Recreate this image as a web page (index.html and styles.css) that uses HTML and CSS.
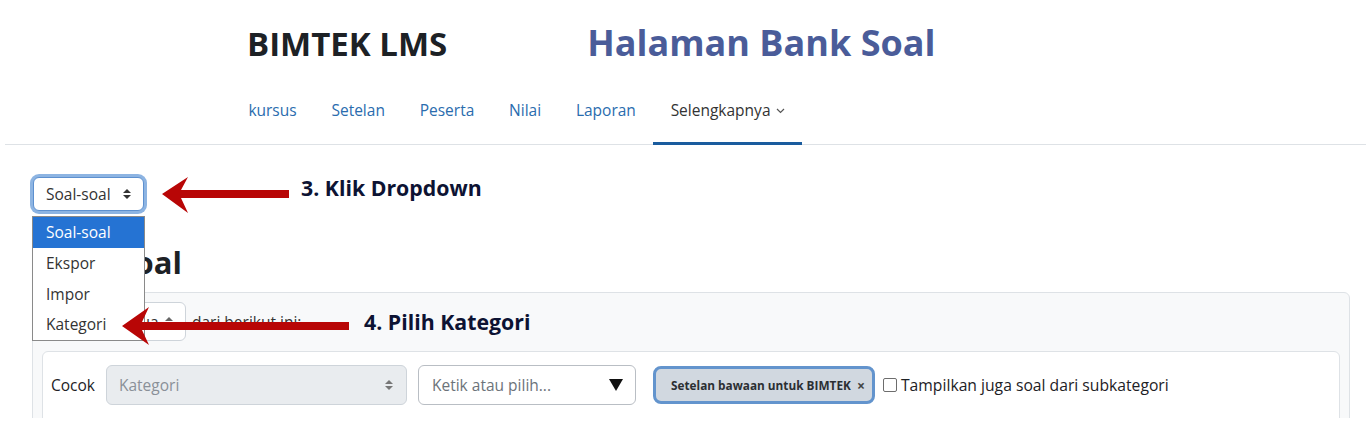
FILE: index.html
```html
<!DOCTYPE html>
<html lang="id">
<head>
<meta charset="utf-8">
<title>Bank soal - BIMTEK LMS</title>
<link rel="stylesheet" href="styles.css">
</head>
<body>
<div class="page">
  <header class="top">
    <div class="brand">BIMTEK LMS</div>
    <div class="caption">Halaman Bank Soal</div>
  </header>
  <nav class="tabs">
    <ul>
      <li><a href="#">kursus</a></li>
      <li><a href="#">Setelan</a></li>
      <li><a href="#">Peserta</a></li>
      <li><a href="#">Nilai</a></li>
      <li><a href="#">Laporan</a></li>
      <li class="active"><a href="#">Selengkapnya<svg class="chev" width="9" height="6" viewBox="0 0 9 6"><polyline points="1,1 4.5,4.5 8,1" fill="none" stroke="#555" stroke-width="1.2"/></svg></a></li>
    </ul>
  </nav>
  <main class="content">
    <div class="jump">
      <div class="select-wrap">
        <div class="sel sel-focus">Soal-soal<svg class="updown" width="8" height="10" viewBox="0 0 8 10"><path d="M0 4 L4 0 L8 4 Z M0 6 L4 10 L8 6 Z" fill="#333"/></svg></div>
        <ul class="listbox">
          <li class="on">Soal-soal</li>
          <li>Ekspor</li>
          <li>Impor</li>
          <li>Kategori</li>
        </ul>
      </div>
      <svg class="arrow1" width="127" height="37" viewBox="0 0 127 37"><path d="M0 17 L26 0 L19 13 L127 13 L127 21 L19 21 L26 36 Z" fill="#b80606"/></svg>
      <span class="note note1">3. Klik Dropdown</span>
    </div>
    <h2 class="title">Bank soal</h2>
    <section class="panel">
      <div class="match">
        <span class="lbl">Cocok</span>
        <div class="sel sel-small">Semua<svg class="updown" width="8" height="10" viewBox="0 0 8 10"><path d="M0 4 L4 0 L8 4 Z M0 6 L4 10 L8 6 Z" fill="#666"/></svg></div>
        <span class="lbl">dari berikut ini:</span>
      </div>
      <div class="cond">
        <span class="lbl">Cocok</span>
        <div class="sel sel-disabled">Kategori<svg class="updown" width="8" height="10" viewBox="0 0 8 10"><path d="M0 4 L4 0 L8 4 Z M0 6 L4 10 L8 6 Z" fill="#777"/></svg></div>
        <div class="combo">Ketik atau pilih...<svg class="tri" width="14" height="12" viewBox="0 0 14 12"><path d="M0 0 L14 0 L7 12 Z" fill="#111"/></svg></div>
        <div class="chip">Setelan bawaan untuk BIMTEK<span class="x">×</span></div>
        <label class="check"><span class="box"></span>Tampilkan juga soal dari subkategori</label>
      </div>
      <svg class="arrow2" width="228" height="40" viewBox="0 0 228 40"><path d="M1 20 L28 1 L21 16 L228 16 L228 24 L21 24 L28 39 Z" fill="#b80606"/></svg>
      <span class="note note2">4. Pilih Kategori</span>
    </section>
  </main>
</div>
</body>
</html>
```
FILE: styles.css
```css
* { box-sizing: border-box; }
html, body { margin: 0; background: #fff; }
body { font-family: "Open Sans", "Noto Sans", sans-serif; color: #1d2125; }
ul { list-style: none; margin: 0; padding: 0; }
a { text-decoration: none; }

.page { height: 418px; overflow: hidden; position: relative; }

.top {
  height: 76px;
  padding: 23px 0 0 247px;
  display: flex;
  align-items: baseline;
  gap: 140px;
}
.brand { font-size: 33px; line-height: 33px; font-weight: 700; color: #1d2125; }
.caption { font-size: 36px; line-height: 40px; font-weight: 700; color: #4a5c99; font-stretch: 88%; }

.tabs { margin-left: 5px; border-bottom: 1px solid #dee2e6; height: 69px; }
.tabs ul { display: flex; padding-left: 226px; height: 68px; }
.tabs li { position: relative; display: flex; align-items: center; padding: 0 17.4px; }
.tabs a { font-size: 15.5px; color: #2a6cae; display: flex; align-items: center; }
.tabs li.active a { color: #333; }
.tabs li.active::after {
  content: ""; position: absolute; left: 0; right: 0; bottom: -1px; height: 3px; background: #1a5c9e;
}
.chev { margin-left: 5px; margin-top: 2px; }

.content { padding: 32px 16px 0 32px; }
.jump { display: flex; align-items: flex-start; }
.select-wrap { position: relative; margin-left: 1px; }
.sel {
  display: flex; align-items: center; justify-content: space-between;
  border: 1px solid #ced4da; border-radius: 6px; background: #fff;
  font-size: 15.5px; color: #333; padding: 0 12px;
}
.sel-focus { width: 111px; height: 34px; border-color: #5d90cf; box-shadow: 0 0 0 3px #8db4e2; }
.updown { flex: none; }
.listbox {
  position: absolute; left: -1px; top: 39px; width: 113px;
  background: #fff; border: 1px solid #8a8a8a; z-index: 3;
}
.listbox li { height: 30.75px; line-height: 30.75px; padding-left: 13px; font-size: 15.5px; color: #333; }
.listbox li.on { background: #2573d3; color: #fff; }

.arrow1 { margin-left: 18px; flex: none; }
.note { font-size: 21.3px; font-weight: 700; color: #0d1333; line-height: 28px; }
.note1 { margin-left: 12px; margin-top: -3px; }

.title { font-size: 31px; line-height: 44px; font-weight: 700; margin: 26px 0 8px 0; color: #1d2125; }

.panel {
  position: relative;
  background: #f8f9fa; border: 1px solid #dee2e6; border-radius: 6px;
  padding: 9px 9px 0 9px; height: 200px;
}
.match { display: flex; align-items: center; gap: 6px; padding-left: 4px; }
.lbl { font-size: 15.5px; color: #1d2125; }
.sel-small { width: 90px; height: 39px; }
.match .lbl:last-child { color: #333; }

.cond {
  margin-top: 10px; background: #fff; border: 1px solid #dee2e6; border-radius: 6px;
  padding: 13px 8px; height: 120px;
  display: flex; align-items: flex-start;
}
.cond .lbl { line-height: 40px; margin-right: 11px; }
.sel-disabled { width: 301px; height: 40px; background: #e9ecef; color: #8a9098; padding: 0 13px 0 12px; }
.combo {
  margin-left: 11px; width: 218px; height: 40px; border: 1px solid #b9bec4; border-radius: 6px;
  display: flex; align-items: center; justify-content: space-between; padding: 0 12px 0 13px;
  font-size: 15.5px; color: #6c737a;
}
.chip {
  margin-left: 17px; margin-top: 1px; width: 222px; height: 38px; border-radius: 8px;
  background: #d1d8e0; border: 3px solid #6394cd;
  display: flex; align-items: center; justify-content: space-between; padding: 0 7px 0 15px;
  font-size: 11.8px; font-weight: 700; color: #2b2f33;
}
.x { font-size: 14px; font-weight: 700; color: #444; }
.check { display: flex; align-items: center; height: 40px; margin-left: 8px; font-size: 15.7px; color: #1d2125; }
.box { width: 14px; height: 14px; border: 1px solid #6d6d6d; border-radius: 2px; background: #fff; margin-right: 4px; }

.arrow2 { position: absolute; left: 88px; top: 13px; z-index: 4; }
.note2 { position: absolute; left: 331px; top: 15px; }
```
